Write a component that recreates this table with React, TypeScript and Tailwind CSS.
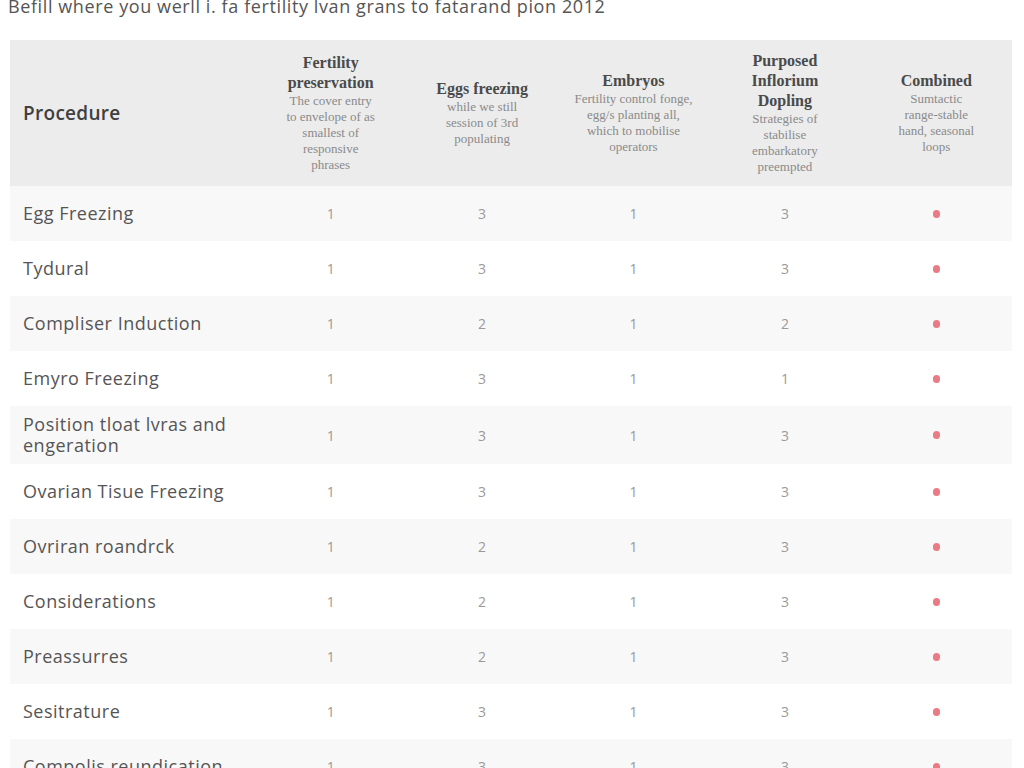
const columns = [
  {
    title: 'Fertility preservation',
    desc: 'The cover entry to envelope of as smallest of responsive phrases',
    w: 'w-[92px]',
  },
  { title: 'Eggs freezing', desc: 'while we still session of 3rd populating', w: 'w-[100px]' },
  { title: 'Embryos', desc: 'Fertility control fonge, egg/s planting all, which to mobilise operators', w: 'w-[120px]' },
  { title: 'Purposed Inflorium Dopling', desc: 'Strategies of stabilise embarkatory preempted', w: 'w-[100px]' },
  { title: 'Combined', desc: 'Sumtactic range-stable hand, seasonal loops', w: 'w-[88px]' },
];

const rows: { name: string; b: string; d: string; tall?: boolean }[] = [
  { name: 'Egg Freezing', b: '3', d: '3' },
  { name: 'Tydural', b: '3', d: '3' },
  { name: 'Compliser Induction', b: '2', d: '2' },
  { name: 'Emyro Freezing', b: '3', d: '1' },
  { name: 'Position tloat lvras and engeration', b: '3', d: '3', tall: true },
  { name: 'Ovarian Tisue Freezing', b: '3', d: '3' },
  { name: 'Ovriran roandrck', b: '2', d: '3' },
  { name: 'Considerations', b: '2', d: '3' },
  { name: 'Preassurres', b: '2', d: '3' },
  { name: 'Sesitrature', b: '3', d: '3' },
  { name: 'Compolis reundication', b: '3', d: '3' },
];

export default function App() {
  return (
    <div className="w-[1024px] h-[768px] overflow-hidden bg-white font-['Open_Sans','Noto_Sans',sans-serif] text-[#4a4a4a]">
      <p className="-mt-[5px] pl-[8px] h-[45px] text-[18px] leading-[22px] tracking-[0.6px] font-medium text-[#555]">
        Befill where you werll i. fa fertility lvan grans to fatarand pion 2012
      </p>
      <div className="mx-[10px] w-[1002px]">
        <div className="grid grid-cols-[245px_repeat(5,1fr)] h-[146px] bg-[#ececec] items-center">
          <div className="pl-[13px] text-[19px] font-semibold tracking-[0.3px] text-[#3f3f3f]">Procedure</div>
          {columns.map((c) => (
            <div key={c.title} className="flex flex-col items-center text-center">
              <div className={`${c.w} text-[16px] leading-[20px] font-bold text-[#4a4a4a] font-['Liberation_Serif',serif]`}>
                {c.title}
              </div>
              <div className={`${c.w} text-[13px] leading-[16px] text-[#8a8a8a] font-['Liberation_Serif',serif]`}>
                {c.desc}
              </div>
            </div>
          ))}
        </div>
        {rows.map((r, i) => (
          <div
            key={r.name}
            className={`grid grid-cols-[245px_repeat(5,1fr)] items-center ${r.tall ? 'h-[58px]' : 'h-[55px]'} ${
              i % 2 === 0 ? 'bg-[#f8f8f8]' : 'bg-white'
            }`}
          >
            <div className="pl-[13px] pr-2 text-[18px] leading-[21px] tracking-[0.5px] text-[#555]">{r.name}</div>
            <div className="text-center text-[14px] text-[#9a9a9a]">1</div>
            <div className="text-center text-[14px] text-[#9a9a9a]">{r.b}</div>
            <div className="text-center text-[14px] text-[#9a9a9a]">1</div>
            <div className="text-center text-[14px] text-[#9a9a9a]">{r.d}</div>
            <div className="flex justify-center">
              <span className="w-[7px] h-[8px] rounded-full bg-[#ea7a84]" />
            </div>
          </div>
        ))}
      </div>
    </div>
  );
}
